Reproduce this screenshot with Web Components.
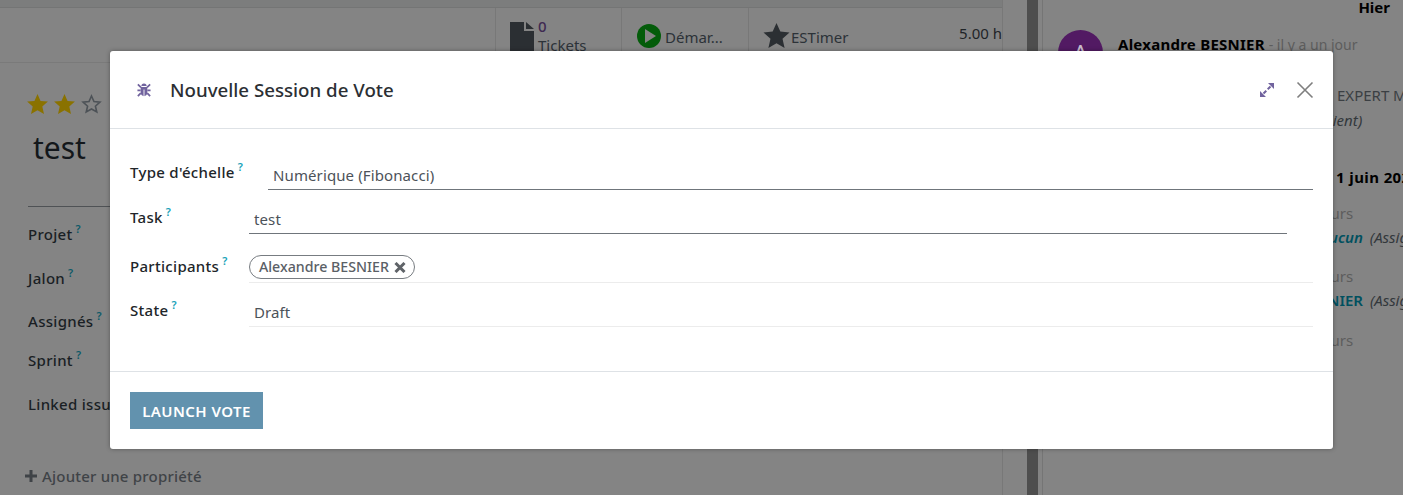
<!DOCTYPE html>
<html lang="fr"><head><meta charset="utf-8">
<style>
html,body{margin:0;padding:0;width:1403px;height:495px;overflow:hidden;background:#848484;font-family:"Noto Sans","Open Sans",sans-serif}
</style></head><body>
<odoo-app></odoo-app>
<script>
const help = '<span style="display:inline-block;color:var(--help,#17a2b8);font-size:11px;font-weight:600;letter-spacing:0;line-height:10px;vertical-align:7px;margin-left:3px">?</span>';
const STAR = "M13 0l3.800 8.600 9.200.9-7 6.200 2.100 9.300L13 20.200 4.900 25 7 15.700 0 9.500l9.200-.9z";
function def(name, css, html){
  customElements.define(name, class extends HTMLElement{
    connectedCallback(){
      if(this.shadowRoot) return;
      const s=this.attachShadow({mode:'open'});
      s.innerHTML='<style>'+css+'</style>'+html;
    }
  });
}
def('stat-btn',`:host{display:flex;align-items:center;border-left:1px solid #787878;box-sizing:border-box;height:100%;font-size:15px;color:#2c3238;overflow:hidden}`,`<slot></slot>`);
def('form-bg',`
:host{display:block;width:1003px;height:495px;background:#848484;color:#1a1f24;font-size:15px;box-sizing:border-box;overflow:hidden;border-right:1px solid #787878}
.strip{height:7px;background:#7c7d7d;border-bottom:1px solid #747575}
.bar{height:54px;display:flex;justify-content:flex-end;border-bottom:1px solid #7a7a7a}
.sheet{padding:29px 0 0 28px}
.stars{display:flex;gap:6px;height:24px;align-items:center;margin-left:-1px}
h1{margin:10px 0 0 5px;font-size:30px;font-weight:400;line-height:44px;color:#13171b}
hr{margin:36px 0 0 0;border:0;border-top:1px solid #4f5255;width:90px}
.lab{font-weight:500;line-height:20px;color:#1a1f24;--help:#0c5a68;letter-spacing:.3px}
.add{font-weight:500;color:#3f4347;margin-left:-3px;display:flex;align-items:center;gap:5px;letter-spacing:.2px;line-height:20px}
`,`<div class="strip"></div>
<div class="bar">
 <stat-btn style="width:126px"><svg width="24" height="29" viewBox="0 0 24 29" style="margin:2px 4px 0 14px"><path fill="#2b2f33" d="M0 0h14v9h10v20H0zM16 0l8 7h-8z"/></svg><span style="line-height:19px;padding-top:1px"><span style="color:#3f2a52;font-weight:500">0</span><br>Tickets</span></stat-btn>
 <stat-btn style="width:127px"><svg width="24" height="24" viewBox="0 0 24 24" style="margin:2px 4px 0 15px"><circle cx="12" cy="12" r="12" fill="#045c0a"/><path d="M8 5l11 7-11 7z" fill="#848484"/></svg><span style="padding-top:4px">Démar...</span></stat-btn>
 <stat-btn style="width:254px"><svg width="27" height="25" viewBox="0 0 26 25" style="margin:0 1px 0 14px"><path fill="#2b2f33" d="${STAR}"/></svg><span style="padding-top:4px">ESTimer</span><span style="margin-left:auto;padding-bottom:4px;color:#1f2428">5.00 h</span></stat-btn>
</div>
<div class="sheet">
 <div class="stars">
  <svg width="21" height="20" viewBox="0 0 26 25"><path fill="#8a7200" d="${STAR}"/></svg>
  <svg width="21" height="20" viewBox="0 0 26 25"><path fill="#8a7200" d="${STAR}"/></svg>
  <svg width="21" height="20" viewBox="0 0 26 25"><path fill="none" stroke="#4d5257" stroke-width="2" d="M13 2.500l3.100 6.900 7.400.8-5.600 5 1.700 7.300L13 18.700l-6.600 3.800 1.700-7.300-5.600-5 7.400-.8z"/></svg>
 </div>
 <h1>test</h1>
 <hr>
 <div class="lab" style="margin-top:17px">Projet${help}</div>
 <div class="lab" style="margin-top:24px">Jalon${help}</div>
 <div class="lab" style="margin-top:23px">Assignés${help}</div>
 <div class="lab" style="margin-top:19px">Sprint${help}</div>
 <div class="lab" style="margin-top:24px">Linked issues</div>
 <div class="add" style="margin-top:52px"><svg width="12" height="12" viewBox="0 0 12 12"><path fill="#3f4347" d="M4.500 0h3v4.500H12v3H7.500V12h-3V7.500H0v-3h4.500z"/></svg>Ajouter une propriété</div>
</div>`);
def('chatter-bg',`
:host{display:block;flex:1;min-width:0;height:495px;background:#848484;border-left:1px solid #757575;box-sizing:border-box;font-size:15px;color:#000;overflow:hidden;white-space:nowrap;padding-left:15px}
.day{font-weight:700;text-align:right;padding-right:13px;line-height:16px;margin-top:-1px}
.msg{display:flex;gap:15px;margin-top:15px}
.av{width:45px;height:45px;border-radius:50%;background:#521a63;color:#c9bccd;font-size:24px;text-align:center;line-height:46px;flex:none}
b{font-weight:700}
.t{color:#5d5d5d}
.ln{line-height:20px}
`,`<div class="day">Hier</div>
<div class="msg"><div class="av">A</div><div class="ln" style="padding-top:4px"><b style="letter-spacing:.25px">Alexandre BESNIER</b> <span class="t" style="font-size:14px">- il y a un jour</span></div></div>
<div class="ln" style="padding-left:279px;margin-top:10px;color:#3b3f43">EXPERT M</div>
<div class="ln" style="padding-left:262px;margin-top:5px;font-style:italic;color:#33383c">Client)</div>
<div class="ln" style="padding-left:278px;margin-top:37px;font-weight:700;letter-spacing:.4px">1 juin 2023</div>
<div class="ln t" style="padding-left:247px;margin-top:16px">9 jours</div>
<div class="ln" style="padding-left:262px;margin-top:4px"><b style="color:#00505f;font-style:italic;font-weight:600">Aucun</b> <i style="color:#33383c;margin-left:3px">(Assigné)</i></div>
<div class="ln t" style="padding-left:247px;margin-top:19px">9 jours</div>
<div class="ln" style="padding-left:243px;margin-top:4px"><b style="color:#00505f;font-weight:600">BESNIER</b> <i style="color:#33383c;margin-left:3px">(Assigné)</i></div>
<div class="ln t" style="padding-left:247px;margin-top:20px">9 jours</div>`);
def('form-row',`
:host{display:grid;grid-template-columns:var(--c,119px) 1fr;align-items:start;font-size:15px}
.l{font-weight:500;color:#212529;line-height:20px;letter-spacing:.3px;padding-top:var(--lt,0)}
.v{color:#4c5259;line-height:20px;box-sizing:border-box;height:var(--h,27px);padding-top:var(--vt,2px);border-bottom:1px solid #ececec;padding-left:5px;letter-spacing:.11px}
:host([strong]) .v{border-bottom-color:#6f757b}
`,`<div class="l"><slot name="label"></slot></div><div class="v"><slot></slot></div>`);
def('modal-dialog',`
:host{display:block;position:absolute;left:110px;top:51px;width:1223px;height:398px;background:#fff;border-radius:3px;box-shadow:0 0 4px rgba(0,0,0,.35);font-size:15px;color:#212529;z-index:2}
header{height:77px;border-bottom:1px solid #dee2e6;display:flex;align-items:center;padding:0 20px 0 27px}
h4{margin:0 0 0 19px;font-size:18.700px;font-weight:500;line-height:24px;color:#2b2f33;flex:1}
.body{height:242px;box-sizing:border-box;padding:33px 20px 0;display:flex;flex-direction:column}
footer{border-top:1px solid #dee2e6;padding:20px}
button{all:unset;box-sizing:border-box;display:block;width:133px;height:37px;background:#6292ae;color:#fff;font:600 15px/39px "Noto Sans","Open Sans",sans-serif;letter-spacing:.45px;text-align:center}
`,`<header>
<svg width="14" height="14" viewBox="0 0 16 16"><path fill="#71639e" d="M5 3.500a3 3 0 0 1 6 0zM4.200 4.500h7.600v7a3.800 3.800 0 0 1-3.300 3.500V7.500h-1V15a3.800 3.800 0 0 1-3.300-3.500z"/><path stroke="#71639e" stroke-width="2" fill="none" d="M1 1.500l3.500 3.500M15 1.500L11.500 5M.5 8.500h3.700M15.500 8.500h-3.700M1 15l3.300-3.500M15 15l-3.300-3.500"/></svg>
<h4>Nouvelle Session de Vote</h4>
<svg width="14" height="14" viewBox="0 0 14 14" style="margin-right:22px"><path fill="#71639e" d="M8 0h6v6zM0 14V8l6 6z"/><path stroke="#71639e" stroke-width="2" d="M3.500 10.500l2.800-2.800M7.700 6.300l2.800-2.800"/></svg>
<svg width="18" height="18" viewBox="0 0 18 18" style="margin-right:-1px"><path stroke="#7f7f7f" stroke-width="1.600" d="M1.500 1.500l15 15M16.500 1.500l-15 15"/></svg>
</header>
<div class="body"><slot></slot></div>
<footer><button>LAUNCH VOTE</button></footer>`);
def('tag-chip',`
:host{display:inline-flex;align-items:center;height:24px;box-sizing:border-box;border:1px solid #777c81;border-radius:12px;padding:0 8px 0 9px;color:#5a6066;font-size:14.200px;font-weight:500;letter-spacing:0;gap:5px;margin-left:-5px;vertical-align:top}
`,`<slot></slot><svg width="12" height="11" viewBox="0 0 12 11"><path stroke="#5f6368" stroke-width="3" d="M1.500 1l9 9M10.500 1l-9 9"/></svg>`);
def('odoo-app',`
:host{display:block;width:1403px;height:495px;position:relative;overflow:hidden}
.page{display:flex;width:1403px;height:495px}
.gap{width:24px;background:#848484}
.sb{width:11px;background:#4e4e4e}
.gap2{width:4px;background:#848484}
form-row+form-row{margin-top:17px}
`,`<div class="page"><form-bg></form-bg><div class="gap"></div><div class="sb"></div><div class="gap2"></div><chatter-bg></chatter-bg></div>
<modal-dialog>
 <form-row strong style="--c:138px;--h:28px;--vt:3px"><span slot="label">Type d'échelle${help}</span>Numérique (Fibonacci)</form-row>
 <form-row strong style="margin-right:26px"><span slot="label">Task${help}</span>test</form-row>
 <form-row style="--h:29px;--vt:1px;--lt:2px;margin-top:20px"><span slot="label">Participants${help}</span><tag-chip>Alexandre BESNIER</tag-chip></form-row>
 <form-row><span slot="label">State${help}</span>Draft</form-row>
</modal-dialog>`);
</script>
</body></html>
